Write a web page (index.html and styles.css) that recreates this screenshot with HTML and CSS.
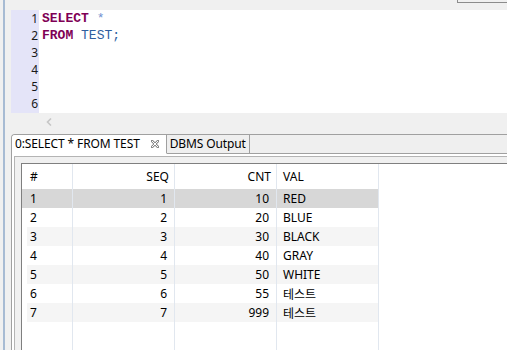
FILE: index.html
```html
<!DOCTYPE html>
<html lang="ko">
<head>
    <meta charset="UTF-8">
    <title>SQL Editor</title>
    <link rel="stylesheet" href="styles.css">
</head>
<body>
    <div class="app">
        <div class="topbar"><div class="toolbox"></div></div>

        <div class="editor">
            <div class="gutter">
                <div>1</div>
                <div>2</div>
                <div>3</div>
                <div>4</div>
                <div>5</div>
                <div>6</div>
            </div>
<pre class="code"><span class="kw">SELECT</span> <span class="op">*</span>
<span class="kw">FROM</span> <span class="id">TEST;</span></pre>
        </div>

        <div class="hscroll">
            <svg class="chevron" width="6" height="8" viewBox="0 0 6 8">
                <polyline points="5,0.5 1.5,4 5,7.5" fill="none" stroke="#c6c6c6" stroke-width="1.6"/>
            </svg>
        </div>

        <div class="results">
            <div class="tabs">
                <div class="tab active">
                    <span class="tab-label">0:SELECT * FROM TEST</span>
                    <svg class="close" width="8" height="8" viewBox="0 0 8 8">
                        <path d="M1 1 L7 7 M7 1 L1 7" stroke="#8a8a8a" stroke-width="2.6" stroke-linecap="square"/>
                        <path d="M1 1 L7 7 M7 1 L1 7" stroke="#fff" stroke-width="1"/>
                    </svg>
                </div>
                <div class="tab"><span class="tab-label">DBMS Output</span></div>
                <div class="tab-fill"></div>
            </div>

            <div class="panel">
                <div class="panel-inner">
                    <div class="grid-box">
                        <table class="grid">
                            <colgroup>
                                <col class="c-num">
                                <col class="c-wide">
                                <col class="c-wide">
                                <col class="c-wide">
                            </colgroup>
                            <thead>
                                <tr>
                                    <th class="left">#</th>
                                    <th class="right">SEQ</th>
                                    <th class="right">CNT</th>
                                    <th class="val">VAL</th>
                                </tr>
                            </thead>
                            <tbody>
                                <tr class="selected">
                                    <td class="left">1</td><td class="right">1</td><td class="right">10</td><td class="val">RED</td>
                                </tr>
                                <tr>
                                    <td class="left">2</td><td class="right">2</td><td class="right">20</td><td class="val">BLUE</td>
                                </tr>
                                <tr class="striped">
                                    <td class="left">3</td><td class="right">3</td><td class="right">30</td><td class="val">BLACK</td>
                                </tr>
                                <tr>
                                    <td class="left">4</td><td class="right">4</td><td class="right">40</td><td class="val">GRAY</td>
                                </tr>
                                <tr class="striped">
                                    <td class="left">5</td><td class="right">5</td><td class="right">50</td><td class="val">WHITE</td>
                                </tr>
                                <tr>
                                    <td class="left">6</td><td class="right">6</td><td class="right">55</td><td class="val">테스트</td>
                                </tr>
                                <tr class="striped">
                                    <td class="left">7</td><td class="right">7</td><td class="right">999</td><td class="val">테스트</td>
                                </tr>
                                <tr class="filler">
                                    <td></td><td></td><td></td><td></td>
                                </tr>
                            </tbody>
                        </table>
                    </div>
                </div>
            </div>
        </div>
    </div>
</body>
</html>
```

FILE: styles.css
```css
* {
    box-sizing: border-box;
}
html, body {
    margin: 0;
    height: 350px;
    overflow: hidden;
}
body {
    background-color: #f0f0f0;
    font-family: "Noto Sans", "Noto Sans CJK KR", sans-serif;
    font-size: 12px;
    color: #000;
}
.app {
    margin-left: 3px;
    border-left: 2px solid #a7bbd3;
    padding-left: 6px;
    height: 350px;
    display: flex;
    flex-direction: column;
}
.topbar {
    height: 10px;
    display: flex;
    justify-content: flex-end;
    flex-shrink: 0;
}
.toolbox {
    width: 50px;
    height: 3px;
    border-left: 1px solid #8c8c8c;
    border-bottom: 1px solid #8c8c8c;
}

/* Editor */
.editor {
    height: 103px;
    display: flex;
    background-color: #fff;
    flex-shrink: 0;
}
.gutter {
    width: 28px;
    background-color: #e4e4f8;
    text-align: right;
    line-height: 17px;
    padding-right: 1px;
    color: #1a1a1a;
}
.code {
    margin: 0;
    padding-left: 3px;
    font-family: "Liberation Mono", monospace;
    font-size: 13px;
    line-height: 17px;
}
.kw {
    color: #7f0055;
    font-weight: bold;
}
.op {
    color: #6f8fd0;
}
.id {
    color: #2f5f9f;
}
.hscroll {
    height: 17px;
    display: flex;
    align-items: center;
    flex-shrink: 0;
}
.chevron {
    margin-left: 35px;
}

/* Results */
.results {
    margin-top: 4px;
    flex: 1;
    display: flex;
    flex-direction: column;
    border-left: 1px solid #a0a0a0;
    border-top: 1px solid #a0a0a0;
    border-top-left-radius: 4px;
    background-color: #efefef;
    overflow: hidden;
}
.tabs {
    display: flex;
    flex-shrink: 0;
}
.tab {
    height: 19px;
    line-height: 18px;
    padding: 0 3px;
    border-right: 1px solid #a0a0a0;
    border-bottom: 1px solid #a0a0a0;
    white-space: nowrap;
}
.tab-label {
    letter-spacing: -0.12px;
}
.tab.active {
    display: flex;
    align-items: center;
    gap: 11px;
    padding-right: 7px;
    background-color: #fff;
    border-bottom-color: #fff;
}
.tab-fill {
    flex: 1;
    border-bottom: 1px solid #a0a0a0;
}
.panel {
    flex: 1;
    display: flex;
    flex-direction: column;
    background-color: #fff;
    padding: 2px 0 0 2px;
}
.panel-inner {
    flex: 1;
    display: flex;
    flex-direction: column;
    border-top: 1px solid #b4b4b4;
    border-left: 1px solid #b4b4b4;
    background-color: #f0f0f0;
    padding: 6px 0 0 6px;
}
.grid-box {
    flex: 1;
    background-color: #fff;
    border-top: 1px solid #7f7f7f;
    border-left: 1px solid #7f7f7f;
    overflow: hidden;
}
.grid {
    width: 357px;
    table-layout: fixed;
    border-collapse: separate;
    border-spacing: 0;
}
.c-num {
    width: 51px;
}
.c-wide {
    width: 102px;
}
.grid th, .grid td {
    border-right: 1px solid #e1e7ef;
    padding: 0;
    font-weight: normal;
    white-space: nowrap;
}
.grid th {
    height: 25px;
}
.grid td {
    height: 19px;
}
.grid .left {
    text-align: left;
    padding-left: 8px;
}
.grid .right {
    text-align: right;
    padding-right: 7px;
}
.grid th.right {
    padding-right: 5px;
}
.grid .val {
    text-align: left;
    padding-left: 6px;
}
.grid tr.selected td {
    background-color: #d7d7d7;
}
.grid tr.striped td {
    background-color: #f5f5f5;
}
.grid tr.striped td:first-child {
    background: linear-gradient(to right, #fff 5px, #f5f5f5 5px);
}
.grid tr.filler td {
    height: 40px;
}
```
